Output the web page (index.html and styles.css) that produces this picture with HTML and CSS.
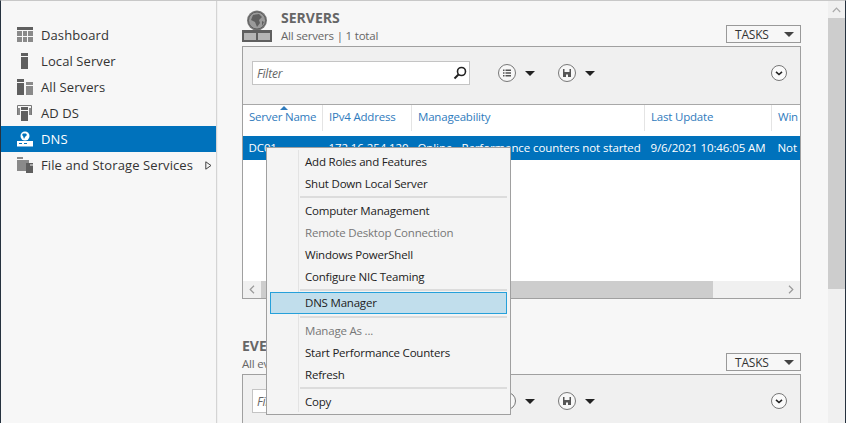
FILE: index.html
```html
<!DOCTYPE html>
<html lang="en">
<head>
<meta charset="utf-8">
<title>Server Manager</title>
<link rel="stylesheet" href="styles.css">
</head>
<body>
<div class="app">
  <nav class="sidebar">
    <a class="nav-item">
      <svg class="nav-icon" viewBox="0 0 16 16"><path fill="#5f5f5f" d="M0 0h16v3H0z"/><path fill="#8a8a8a" d="M0 4h5v5H0zM6 4h4v5H6zM11 4h5v5h-5zM0 10h5v5H0zM6 10h4v5H6zM11 10h5v5h-5z"/></svg>
      <span>Dashboard</span>
    </a>
    <a class="nav-item">
      <svg class="nav-icon" viewBox="0 0 16 16"><path fill="#5f5f5f" d="M4 0h7v3H4zM4 4h7v12H4z"/></svg>
      <span>Local Server</span>
    </a>
    <a class="nav-item">
      <svg class="nav-icon" viewBox="0 0 16 16"><path fill="#5f5f5f" d="M0 0h7v3H0zM0 4h7v12H0z"/><path fill="#8a8a8a" d="M9 3h7v3H9zM9 7h7v9H9z"/></svg>
      <span>All Servers</span>
    </a>
    <a class="nav-item">
      <svg class="nav-icon" viewBox="0 0 16 16"><path fill="none" stroke="#777" d="M.5 10V.5h14V10"/><path fill="#5f5f5f" d="M4 2h7v3H4zM4 6h7v10H4z"/><path fill="#8a8a8a" d="M1 3h2v7H1zM12 3h2v7h-2z"/></svg>
      <span>AD DS</span>
    </a>
    <a class="nav-item active">
      <svg class="nav-icon" viewBox="0 0 16 16"><circle cx="8" cy="5" r="4.500" fill="#fff"/><path fill="#0072bc" d="M6 2.500h3l1 1.500-2 2-1 2-1-3-1-1z"/><path fill="#fff" d="M0 10h16v5.500H0z"/><path fill="#0072bc" d="M2 12h3v1H2zM7 12h3v1H7z"/></svg>
      <span>DNS</span>
    </a>
    <a class="nav-item">
      <svg class="nav-icon" viewBox="0 0 16 16"><path fill="#8a8a8a" d="M0 0h6v2H0zM0 3h12v11H0z"/><path fill="#5f5f5f" d="M9 6h7v10H9z"/><path fill="none" stroke="#f7f7f7" d="M13 8h3"/></svg>
      <span>File and Storage Services</span>
      <svg class="nav-arrow" viewBox="0 0 7 9"><path fill="none" stroke="#444" d="M.8 .8v7.400L6 4.500z"/></svg>
    </a>
  </nav>

  <main class="content">
    <section class="tile tile-servers">
      <header class="tile-head">
        <svg class="tile-icon" viewBox="0 0 30 32"><circle cx="15" cy="10.500" r="10" fill="#777"/><circle cx="15" cy="10.500" r="8.500" fill="#9a9a9a" stroke="#5f5f5f"/><path fill="#5f5f5f" d="M11 5l6-1 3 3-3 3 1 3-3 4-2-5-4-2zM20 11l2 1-2 4z"/><path fill="#5f5f5f" d="M0 20h30v12H0z"/><path fill="#b5b5b5" d="M2 23h12v7H2zM16 23h12v7H16z"/></svg>
        <div class="tile-title">
          <h2>SERVERS</h2>
          <p>All servers | 1 total</p>
        </div>
        <button class="tasks">TASKS<i class="caret"></i></button>
      </header>
      <div class="panel panel-tall">
        <div class="toolbar">
          <div class="filter"><span>Filter</span>
            <svg class="search" viewBox="0 0 14 14"><circle cx="8.500" cy="5.500" r="4" fill="none" stroke="#222" stroke-width="1.600"/><path stroke="#222" stroke-width="2" d="M5.500 8.500L1.500 12.500"/></svg>
          </div>
          <div class="tool tool-list">
            <svg class="round" viewBox="0 0 18 18"><circle cx="9" cy="9" r="8.500" fill="#f7f7f7" stroke="#777"/><path fill="#555" d="M5 5.500h1.500V7H5zM7.500 5.500H13V7H7.500zM5 8.200h1.500v1.500H5zM7.500 8.200H13v1.500H7.500zM5 11h1.500v1.500H5zM7.500 11H13v1.500H7.500z"/></svg>
            <i class="caret dark"></i>
          </div>
          <div class="tool">
            <svg class="round" viewBox="0 0 18 18"><circle cx="9" cy="9" r="8.500" fill="#f7f7f7" stroke="#777"/><path fill="#555" d="M5 5h8v8H5z"/><path fill="#f7f7f7" d="M6.500 5h5v3h-5zM8 10.500h2V13H8z"/></svg>
            <i class="caret dark"></i>
          </div>
          <svg class="expand" viewBox="0 0 16 16"><circle cx="8" cy="8" r="7.500" fill="#fafafa" stroke="#777"/><path fill="none" stroke="#222" stroke-width="1.600" d="M5 6.800l3 2.700 3-2.700"/></svg>
        </div>
        <div class="grid grid-head">
          <div class="col sorted">Server Name<i class="sort"></i></div>
          <div class="col">IPv4 Address</div>
          <div class="col">Manageability</div>
          <div class="col">Last Update</div>
          <div class="col">Win</div>
        </div>
        <div class="grid grid-row">
          <div class="cell">DC01</div>
          <div class="cell">172.16.254.120</div>
          <div class="cell">Online - Performance counters not started</div>
          <div class="cell">9/6/2021 10:46:05 AM</div>
          <div class="cell">Not</div>
        </div>
        <div class="grid-empty"></div>
        <div class="hscroll">
          <svg class="hs-arrow" viewBox="0 0 6 9"><path fill="none" stroke="#999" stroke-width="1.200" d="M5 .8L1.200 4.500 5 8.200"/></svg>
          <div class="hs-thumb"></div>
          <svg class="hs-arrow" viewBox="0 0 6 9"><path fill="none" stroke="#999" stroke-width="1.200" d="M1 .8l3.800 3.700L1 8.200"/></svg>
        </div>
      </div>
    </section>

    <section class="tile tile-events">
      <header class="tile-head tile-head-plain">
        <div class="tile-title">
          <h2>EVENTS</h2>
          <p>All events | 0 total</p>
        </div>
        <button class="tasks">TASKS<i class="caret"></i></button>
      </header>
      <div class="panel">
        <div class="toolbar">
          <div class="filter"><span>Filter</span>
            <svg class="search" viewBox="0 0 14 14"><circle cx="8.500" cy="5.500" r="4" fill="none" stroke="#222" stroke-width="1.600"/><path stroke="#222" stroke-width="2" d="M5.500 8.500L1.500 12.500"/></svg>
          </div>
          <div class="tool tool-list">
            <svg class="round" viewBox="0 0 18 18"><circle cx="9" cy="9" r="8.500" fill="#f7f7f7" stroke="#777"/></svg>
            <i class="caret dark"></i>
          </div>
          <div class="tool">
            <svg class="round" viewBox="0 0 18 18"><circle cx="9" cy="9" r="8.500" fill="#f7f7f7" stroke="#777"/><path fill="#555" d="M5 5h8v8H5z"/><path fill="#f7f7f7" d="M6.500 5h5v3h-5zM8 10.500h2V13H8z"/></svg>
            <i class="caret dark"></i>
          </div>
          <svg class="expand" viewBox="0 0 16 16"><circle cx="8" cy="8" r="7.500" fill="#fafafa" stroke="#777"/><path fill="none" stroke="#222" stroke-width="1.600" d="M5 6.800l3 2.700 3-2.700"/></svg>
        </div>
      </div>
    </section>
  </main>

  <div class="vscroll">
    <svg class="vs-arrow" viewBox="0 0 9 6"><path fill="none" stroke="#aaa" stroke-width="1.200" d="M.8 5L4.500 1.200 8.200 5"/></svg>
    <div class="vs-thumb"></div>
  </div>
</div>

<div class="menu">
  <div class="menu-item">Add Roles and Features</div>
  <div class="menu-item">Shut Down Local Server</div>
  <div class="menu-sep"></div>
  <div class="menu-item">Computer Management</div>
  <div class="menu-item disabled">Remote Desktop Connection</div>
  <div class="menu-item">Windows PowerShell</div>
  <div class="menu-item">Configure NIC Teaming</div>
  <div class="menu-sep"></div>
  <div class="menu-item hot">DNS Manager</div>
  <div class="menu-sep"></div>
  <div class="menu-item disabled">Manage As ...</div>
  <div class="menu-item">Start Performance Counters</div>
  <div class="menu-item">Refresh</div>
  <div class="menu-sep"></div>
  <div class="menu-item">Copy</div>
</div>
</body>
</html>
```
FILE: styles.css
```css
* { box-sizing: border-box; }
html, body { margin: 0; height: 100%; overflow: hidden; }
body {
  background: #f7f7f7;
  color: #333;
  font: 11.5px/16px "Open Sans", "Noto Sans", sans-serif;
  letter-spacing: -0.2px;
  position: relative;
}
.app {
  display: flex;
  height: 423px;
  border-top: 1px solid #c8c8c8;
  border-left: 1px solid #26323f;
  border-right: 1px solid #26323f;
}
.sidebar {
  width: 216px;
  flex: none;
  padding-top: 21px;
  border-right: 1px solid #d4d4d4;
  background: #f7f7f7;
  margin-right: 25px;
  box-shadow: 1px 0 0 #f0f0f0;
}
.nav-item {
  display: flex;
  align-items: center;
  height: 26px;
  padding-left: 16px;
  font-size: 13px;
  letter-spacing: 0.1px;
  color: #333;
}
.nav-item span { margin-left: 8px; }
.nav-icon { width: 16px; height: 16px; flex: none; }
.nav-arrow { width: 7px; height: 9px; margin-left: auto; margin-right: 4px; }
.nav-item.active { background: #0072bc; color: #fff; }

.content { width: 559px; flex: none; }
.tile-head {
  display: flex;
  align-items: flex-end;
  height: 45px;
  padding-top: 9px;
}
.tile-icon { width: 30px; height: 32px; flex: none; margin-right: 9px; align-self: flex-start; }
.tile-title { flex: 1; }
.tile-title h2 { margin: 0; font-size: 14px; line-height: 16px; font-weight: 700; color: #666; letter-spacing: 0; }
.tile-title p { margin: 2px 0 0; line-height: 16px; color: #666; }
.tile-servers .tile-title { align-self: flex-start; }
.tile-head .tasks { margin: 0 0 3px; }
.tasks {
  display: flex;
  align-items: center;
  justify-content: space-between;
  width: 75px;
  height: 18px;
  margin: 0;
  padding: 1px 6px 0 8px;
  background: #f7f7f7;
  border: 1px solid #999;
  font: inherit;
  font-size: 12px;
  letter-spacing: -0.2px;
  color: #333;
}
.caret {
  display: block;
  width: 0;
  height: 0;
  border: 5px solid transparent;
  border-top-color: #444;
  border-bottom: 0;
}
.caret.dark { border-top-color: #222; }

.panel {
  width: 559px;
  border: 1px solid #a0a0a0;
  background: #fff;
  display: flex;
  flex-direction: column;
}
.panel-tall { height: 253px; }
.toolbar {
  display: flex;
  align-items: center;
  height: 58px;
  flex: none;
  padding: 0 13px 5px 9px;
  background: #f0f0f0;
  border-bottom: 1px solid #a8a8a8;
}
.filter {
  display: flex;
  align-items: center;
  justify-content: space-between;
  width: 218px;
  height: 24px;
  padding: 0 2px 0 4px;
  background: #fff;
  border: 1px solid #c4c4c4;
  color: #666;
  font-size: 12px;
  font-style: italic;
}
.filter span { padding-top: 1px; }
.search { width: 14px; height: 14px; }
.tool { display: flex; align-items: center; gap: 9px; width: 60px; }
.tool-list { margin-left: 28px; }
.round { width: 18px; height: 18px; flex: none; }
.expand { width: 16px; height: 16px; margin-left: auto; }

.grid {
  display: grid;
  grid-template-columns: 80px 89px 233px 127px 1fr;
  flex: none;
}
.grid-head { height: 31px; background: #fff; }
.col {
  position: relative;
  padding: 4px 0 0 6px;
  color: #2f7bbd;
  line-height: 16px;
  border-right: 1px solid #e4e4e4;
  margin-bottom: 5px;
  white-space: nowrap;
  overflow: hidden;
}
.col:last-child { border-right: 0; }
.sort {
  position: absolute;
  left: 37px;
  top: 1px;
  border: 4px solid transparent;
  border-bottom-color: #2f7bbd;
  border-top: 0;
}
.grid-row { height: 24px; background: #0072bc; color: #fff; letter-spacing: -0.1px; }
.cell { padding: 4px 0 0 5.5px; white-space: nowrap; overflow: hidden; }
.grid-empty { flex: 1; background: #fff; }
.hscroll {
  display: flex;
  align-items: center;
  height: 17px;
  flex: none;
  background: #f0f0f0;
}
.hs-arrow { width: 6px; height: 9px; margin: 0 6px; flex: none; }
.hs-thumb { width: 452px; height: 17px; background: #cdcdcd; margin-right: auto; }

.tile-head-plain { height: 75px; padding: 0; }
.tile-head-plain .tile-title { padding-bottom: 2px; }

.vscroll {
  width: 17px;
  flex: none;
  margin-left: 27px;
  background: #f0f0f0;
  display: flex;
  flex-direction: column;
  align-items: center;
}
.vs-arrow { width: 9px; height: 6px; margin: 6px 0 5px; flex: none; }
.vs-thumb { width: 100%; height: 271px; background: #cdcdcd; }

.menu {
  position: absolute;
  left: 266px;
  top: 147px;
  width: 245px;
  height: 268px;
  padding: 4px 2px 3px;
  background: #f4f4f4;
  border: 1px solid #a0a0a0;
  color: #222;
}
.menu::before {
  content: "";
  position: absolute;
  left: 31px;
  top: 2px;
  bottom: 2px;
  width: 1px;
  background: #e3e3e3;
}
.menu-item {
  position: relative;
  height: 22px;
  line-height: 20px;
  padding-left: 36px;
  white-space: nowrap;
}
.menu-item.disabled { color: #777; }
.menu-item.hot {
  margin: -2px 1px 2px;
  background: #c1deec;
  border: 1px solid #26a0da;
  padding-left: 34px;
}
.menu-sep {
  position: relative;
  height: 2px;
  margin: 0 1px 3px 31px;
  background: #dcdcdc;
}
```
